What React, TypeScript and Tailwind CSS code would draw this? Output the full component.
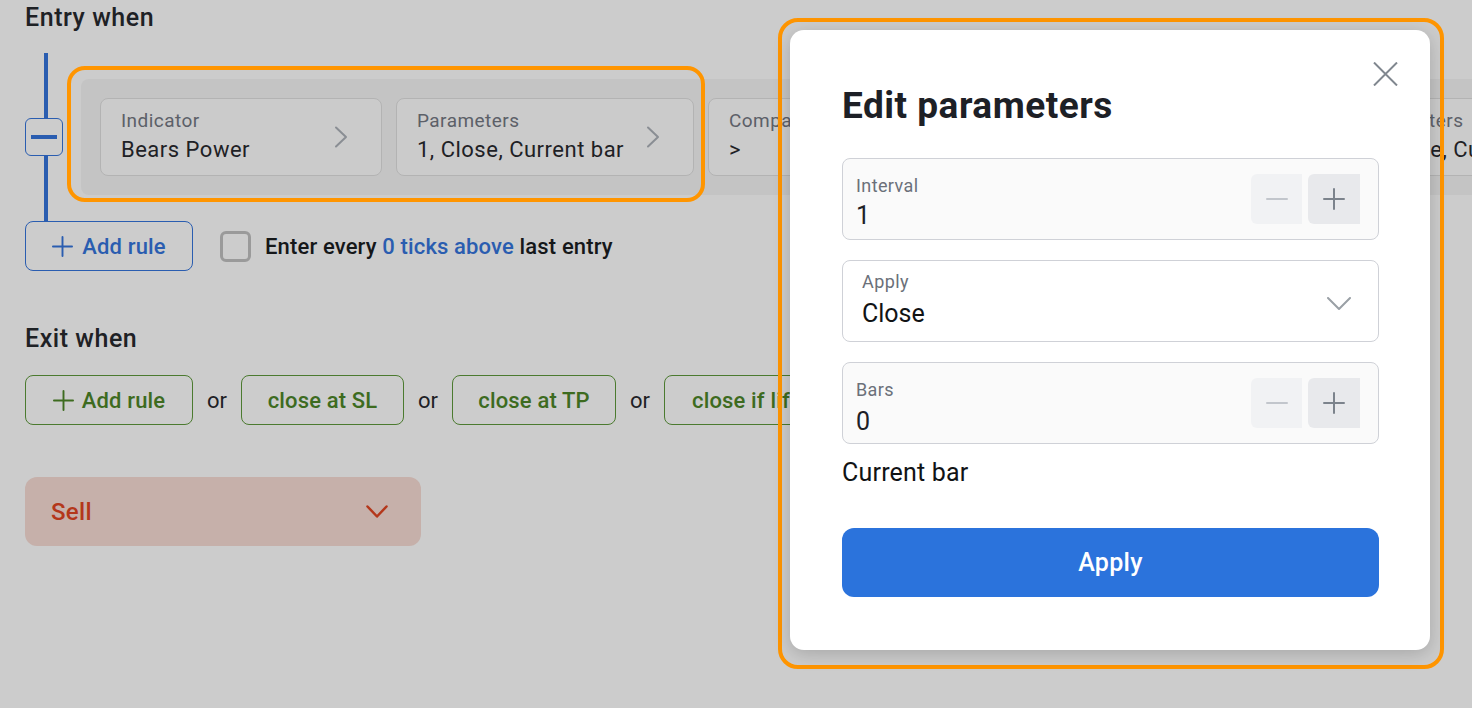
import React from 'react';

function ChevronRight() {
  return (
    <svg width="14" height="22" viewBox="0 0 14 22" fill="none" className="shrink-0">
      <path d="M2 1.5 L12 11 L2 20.5" stroke="#8a8e94" strokeWidth="2" strokeLinecap="round" strokeLinejoin="round" />
    </svg>
  );
}

function Card({ label, value, width, chevron = true }: { label: string; value: string; width: string; chevron?: boolean }) {
  return (
    <div className={`${width} shrink-0 h-[78px] rounded-[8px] border border-[#b3b3b3] bg-[#cbcbcb] pl-[20px] pr-[33px] flex items-center justify-between`}>
      <div className="flex flex-col whitespace-nowrap">
        <span className="text-[19px] leading-[22px] tracking-[0.45px] text-[#5c6068]">{label}</span>
        <span className="mt-[4px] text-[22px] leading-[28px] tracking-[0.5px] text-[#1e2125]">{value}</span>
      </div>
      {chevron && <ChevronRight />}
    </div>
  );
}

function PlusIcon({ color, size = 21 }: { color: string; size?: number }) {
  return (
    <svg width={size} height={size} viewBox="0 0 22 22" fill="none" className="shrink-0">
      <path d="M11 1 V21 M1 11 H21" stroke={color} strokeWidth="2" strokeLinecap="round" />
    </svg>
  );
}

function ExitButton({ children, className }: { children: React.ReactNode; className: string }) {
  return (
    <button className={`${className} shrink-0 h-[50px] rounded-[8px] border border-[#4b7a2f] text-[#3d6b1f] text-[22px] font-medium tracking-[0.15px] flex items-center gap-[8px] whitespace-nowrap`}>
      {children}
    </button>
  );
}

function Or() {
  return <span className="mx-[14px] text-[22px] text-[#1e2125]">or</span>;
}

function NumberField({ label, value, valueMt }: { label: string; value: string; valueMt: string }) {
  return (
    <div className="h-[82px] rounded-[8px] border border-[#cfd1d7] bg-[#fafafa] flex justify-between pl-[13px] pr-[18px]">
      <div className="flex flex-col pt-[16px]">
        <span className="text-[18px] leading-[22px] tracking-[0.4px] text-[#6b7079]">{label}</span>
        <span className={`${valueMt} text-[25px] leading-[30px] text-[#1d2026]`}>{value}</span>
      </div>
      <div className="flex gap-[6px] pt-[15px]">
        <button className="w-[51px] h-[50px] rounded-l-[6px] bg-[#f1f2f4] flex items-center justify-center">
          <span className="w-[22px] h-[2.5px] bg-[#c2c6cc] rounded-full" />
        </button>
        <button className="w-[52px] h-[50px] rounded-l-[6px] bg-[#e8e9ec] flex items-center justify-center">
          <PlusIcon color="#7c838c" size={22} />
        </button>
      </div>
    </div>
  );
}

export default function App() {
  return (
    <div className="relative w-[1472px] h-[708px] overflow-hidden bg-[#cccccc] font-['Roboto',sans-serif]">
      <div className="pl-[25px] pt-[4px]">
        <h2 className="text-[25px] leading-[28px] font-medium tracking-[0.55px] text-[#1e2125]">Entry when</h2>

        <div className="mt-[21px] flex items-center h-[168px]">
          <div className="flex flex-col items-center w-[38px] h-full shrink-0">
            <div className="w-[4px] ml-[3px] flex-1 bg-[#2a5db0]" />
            <button className="w-[38px] h-[38px] rounded-[6px] border border-[#2a5db0] flex items-center justify-center">
              <span className="w-[26px] h-[3.5px] bg-[#2a5db0]" />
            </button>
            <div className="w-[4px] ml-[3px] flex-1 bg-[#2a5db0]" />
          </div>
          <div className="ml-[18px] flex-1 min-w-0 h-[116px] bg-[#c4c4c4] rounded-l-[8px] flex items-center gap-[14px] pl-[19px] overflow-hidden">
            <Card label="Indicator" value="Bears Power" width="w-[282px]" />
            <Card label="Parameters" value="1, Close, Current bar" width="w-[298px]" />
            <Card label="Comparison" value=">" width="w-[290px]" />
            <Card label="Indicator" value="Bulls Power" width="w-[314px]" />
            <Card label="Parameters" value="1, Close, Current bar" width="w-[298px]" />
          </div>
        </div>

        <div className="flex items-center">
          <button className="w-[168px] h-[50px] rounded-[8px] border border-[#2a5db0] text-[#2a5db0] text-[22px] font-medium tracking-[0.15px] flex items-center justify-center gap-[9px]">
            <PlusIcon color="#2a5db0" />
            <span>Add rule</span>
          </button>
          <span className="ml-[27px] w-[31px] h-[31px] rounded-[6px] border-[3px] border-[#9a9a9a]" />
          <span className="ml-[14px] text-[22px] font-medium tracking-[0.15px] text-[#151719]">
            Enter every <span className="text-[#2a5db0]">0 ticks above</span> last entry
          </span>
        </div>

        <h2 className="mt-[54px] text-[25px] leading-[28px] font-medium tracking-[0.55px] text-[#1e2125]">Exit when</h2>

        <div className="mt-[22px] flex items-center">
          <ExitButton className="w-[168px] justify-center">
            <PlusIcon color="#3d6b1f" />
            <span>Add rule</span>
          </ExitButton>
          <Or />
          <ExitButton className="w-[163px] justify-center">close at SL</ExitButton>
          <Or />
          <ExitButton className="w-[164px] justify-center">close at TP</ExitButton>
          <Or />
          <ExitButton className="pl-[27px] pr-[27px]">close if lifetime exceeds</ExitButton>
        </div>

        <div className="mt-[52px] w-[396px] h-[69px] rounded-[12px] bg-[#c6b0aa] pl-[26px] pr-[33px] flex items-center justify-between">
          <span className="text-[24px] font-medium tracking-[0.3px] text-[#b4371b]">Sell</span>
          <svg width="22" height="14" viewBox="0 0 22 14" fill="none">
            <path d="M1.5 1.5 L11 11.5 L20.5 1.5" stroke="#b4371b" strokeWidth="2.5" strokeLinecap="round" strokeLinejoin="round" />
          </svg>
        </div>
      </div>

      {/* annotation highlight around rule */}
      <div className="absolute left-[67px] top-[66px] w-[638px] h-[136px] rounded-[18px] border-[4px] border-[#ff9500] pointer-events-none" />

      {/* annotation highlight around modal */}
      <div className="absolute left-[778px] top-[18px] w-[666px] h-[651px] rounded-[20px] border-[4px] border-[#ff9500] pointer-events-none" />

      {/* modal */}
      <div className="absolute left-[790px] top-[30px] w-[640px] h-[620px] rounded-[14px] bg-white shadow-[0_4px_18px_rgba(0,0,0,0.18)] pl-[52px] pr-[51px] pt-[55px]">
        <button className="absolute left-[583px] top-[32px] w-[25px] h-[24px]">
          <svg width="25" height="24" viewBox="0 0 25 24" fill="none">
            <path d="M1 0.5 L24 23.5 M24 0.5 L1 23.5" stroke="#80878f" strokeWidth="2" />
          </svg>
        </button>
        <h1 className="text-[37px] leading-[42px] font-bold tracking-[0.5px] text-[#1d2026]">Edit parameters</h1>

        <div className="mt-[31px]">
          <NumberField label="Interval" value="1" valueMt="mt-[4px]" />
        </div>

        <div className="mt-[20px] h-[82px] rounded-[8px] border border-[#cfd1d7] bg-white flex justify-between pl-[19px] pr-[27px]">
          <div className="flex flex-col pt-[10px]">
            <span className="text-[18px] leading-[22px] tracking-[0.4px] text-[#6b7079]">Apply</span>
            <span className="mt-[6px] text-[25px] leading-[30px] text-[#111315]">Close</span>
          </div>
          <svg width="24" height="14" viewBox="0 0 24 14" fill="none" className="self-center mt-[6px]">
            <path d="M1 1 L12 12 L23 1" stroke="#9aa0a6" strokeWidth="2" strokeLinecap="round" strokeLinejoin="round" />
          </svg>
        </div>

        <div className="mt-[20px]">
          <NumberField label="Bars" value="0" valueMt="mt-[6px]" />
        </div>

        <p className="mt-[14px] text-[25px] leading-[30px] tracking-[0.2px] text-[#111315]">Current bar</p>

        <button className="mt-[40px] w-full h-[69px] rounded-[12px] bg-[#2b73dc] text-white text-[25px] font-medium tracking-[0.3px] flex items-center justify-center">
          Apply
        </button>
      </div>
    </div>
  );
}
